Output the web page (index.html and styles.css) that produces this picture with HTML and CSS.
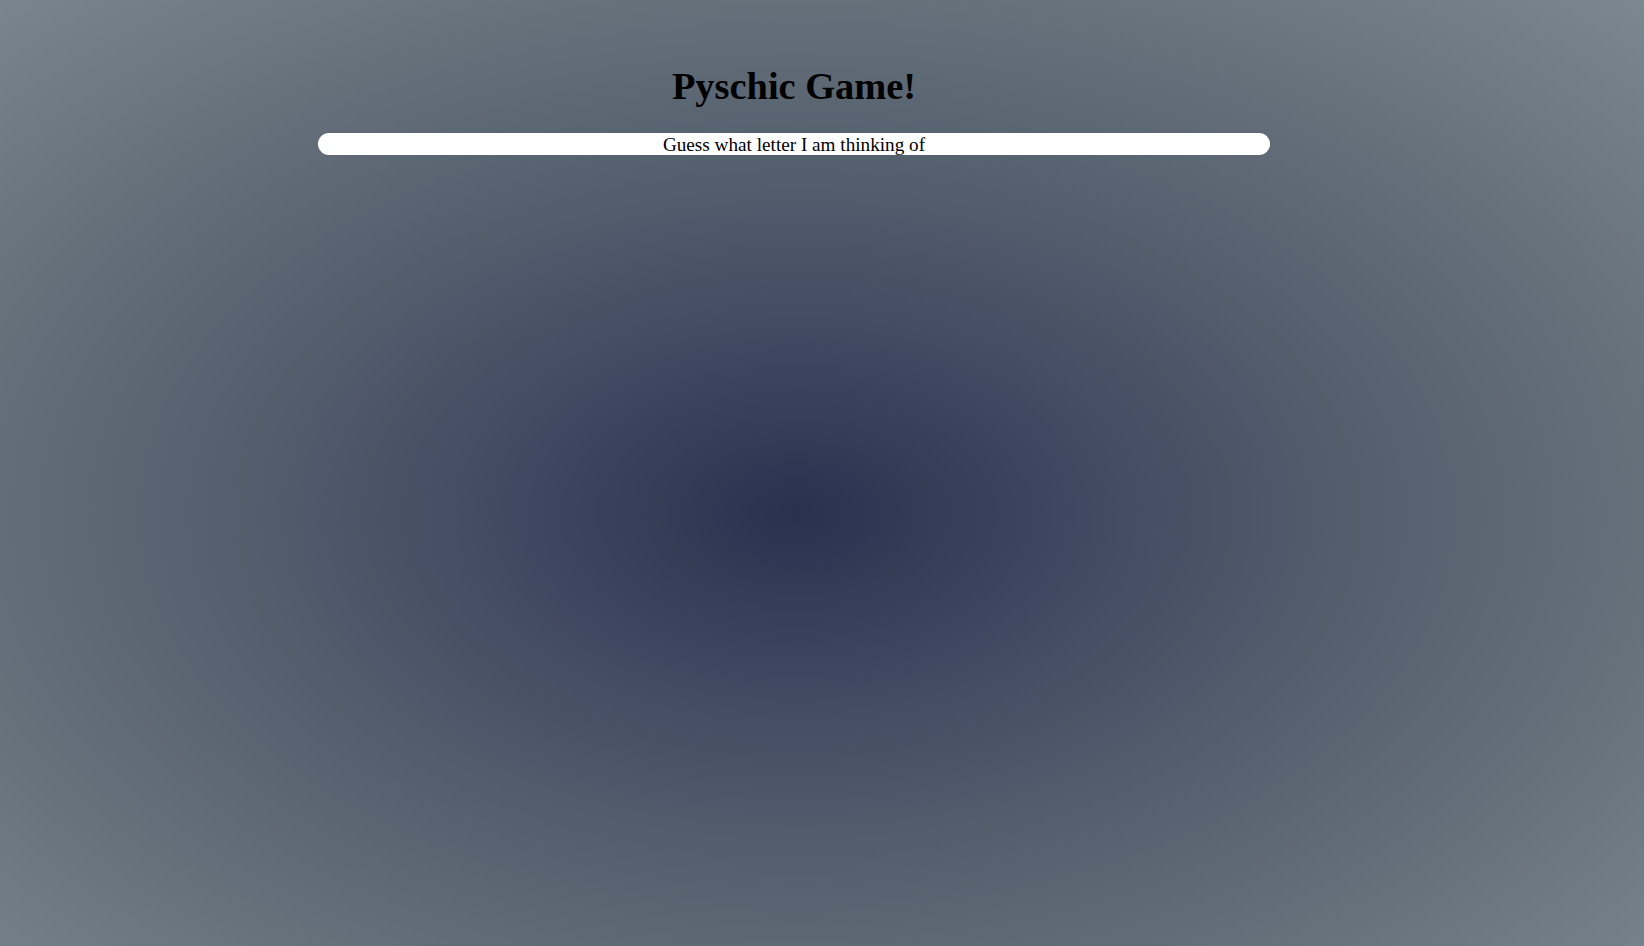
FILE: index.html
```html
<!DOCTYPE html>
<html lang="en">
<head>
<meta charset="utf-8">
<title>Pyschic Game!</title>
<link rel="stylesheet" href="styles.css">
</head>
<body>
  <main class="page">
    <h1 class="title">Pyschic Game!</h1>
    <div class="bar">Guess what letter I am thinking of</div>
  </main>
</body>
</html>
```
FILE: styles.css
```css
html, body {
  margin: 0;
  padding: 0;
  height: 100%;
}

body {
  min-height: 946px;
  background: radial-gradient(ellipse farthest-corner at 797px 514px, #2a3050 0%, #353d57 12%, #454f65 30%, #56616f 50%, #66717c 72%, #7b8890 100%);
  font-family: "Liberation Serif", "Times New Roman", serif;
  color: #000;
}

.page {
  width: 1588px;
  display: flex;
  flex-direction: column;
  align-items: center;
  padding-top: 64px;
}

.title {
  margin: 0;
  font-size: 38.4px;
  line-height: 44px;
  font-weight: bold;
  text-align: center;
}

.bar {
  margin-top: 25px;
  width: 952px;
  height: 22px;
  line-height: 23px;
  background: #fff;
  border-radius: 11px;
  font-size: 19.2px;
  text-align: center;
}
```
